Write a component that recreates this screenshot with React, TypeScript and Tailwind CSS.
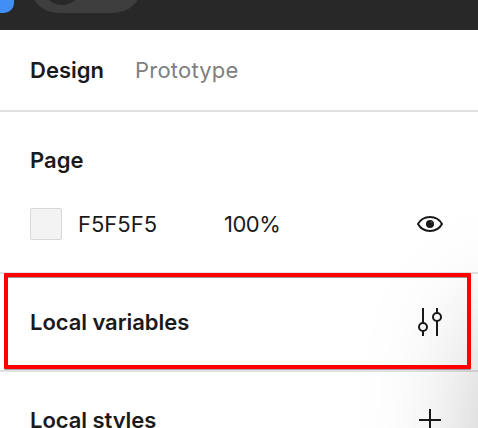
import React from 'react';

function EyeIcon() {
  return (
    <svg width="28" height="18" viewBox="0 0 28 18" fill="none" className="block">
      <path d="M2 9C4.6 4.3 8.8 2 14 2s9.4 2.3 12 7c-2.6 4.7-6.8 7-12 7S4.6 13.700 2 9Z" stroke="#1a1a1a" strokeWidth="2" strokeLinejoin="round" />
      <circle cx="14" cy="9" r="4" fill="#1a1a1a" />
      <circle cx="15.800" cy="7" r="0.600" fill="#aaa" />
    </svg>
  );
}

function VariablesIcon() {
  return (
    <svg width="26" height="28" viewBox="0 0 26 28" fill="none" stroke="#1a1a1a" strokeWidth="2" className="block">
      <path d="M6 0v15M6 23v5M20 0v5M20 13v15" />
      <circle cx="6" cy="19" r="4" />
      <circle cx="20" cy="9" r="4" />
    </svg>
  );
}

function PlusIcon() {
  return (
    <svg width="22" height="22" viewBox="0 0 22 22" fill="none" stroke="#1a1a1a" strokeWidth="2" className="block">
      <path d="M11 0v22M0 11h22" />
    </svg>
  );
}

export default function App() {
  return (
    <div className="relative flex h-[428px] w-[478px] flex-col overflow-hidden bg-white font-['Inter',sans-serif] text-[22px] leading-8 text-[#1a1a1a]">
      <header className="flex h-[30px] shrink-0 items-start overflow-hidden bg-[#282828]">
        <div className="h-[13px] w-[14px] rounded-br-[10px] bg-[#3f8ff7]" />
        <div className="-mt-[43px] ml-[16px] h-14 w-[112px] shrink-0 overflow-hidden rounded-full bg-[#3e3e3e]">
          <div className="mt-[8px] ml-[12px] size-10 rounded-full bg-[#282828]" />
        </div>
      </header>

      <nav className="flex h-[82px] shrink-0 items-center gap-[31px] border-b-2 border-[#e2e2e2] pl-[30px]">
        <span className="w-[74px] whitespace-nowrap font-semibold">Design</span>
        <span className="whitespace-nowrap tracking-[0.22px] text-[#808080]">Prototype</span>
      </nav>

      <section className="flex h-[162px] shrink-0 flex-col border-b-2 border-[#e2e2e2] px-[30px] pt-8">
        <h2 className="font-semibold">Page</h2>
        <div className="mt-8 flex h-8 items-center">
          <div className="size-8 rounded-[2px] border border-[#d8d8d8] bg-[#f3f3f3]" />
          <span className="ml-4 w-[146px]">F5F5F5</span>
          <span className="tracking-[-0.5px]">100%</span>
          <span className="ml-auto -mr-[-4px]"><EyeIcon /></span>
        </div>
      </section>

      <section className="flex h-[98px] shrink-0 items-center justify-between border-b-2 border-[#e2e2e2] pr-[35px] pl-[30px]">
        <h2 className="font-semibold tracking-[-0.06px]">Local variables</h2>
        <VariablesIcon />
      </section>

      <section className="flex h-24 shrink-0 items-center justify-between pr-[37px] pl-[30px]">
        <h2 className="font-semibold tracking-[-0.06px]">Local styles</h2>
        <PlusIcon />
      </section>

      <div className="pointer-events-none absolute top-[325px] left-[486px] h-[500px] w-[500px] shadow-[0_0_110px_rgba(0,0,0,0.27)]" />
      <div className="pointer-events-none absolute top-[273px] left-1 h-[96px] w-[467px] rounded-[1px] border-4 border-[#ff0000] shadow-[0_1px_0_rgba(0,0,0,0.35),inset_0_1px_0_rgba(0,0,0,0.4)]" />
    </div>
  );
}
